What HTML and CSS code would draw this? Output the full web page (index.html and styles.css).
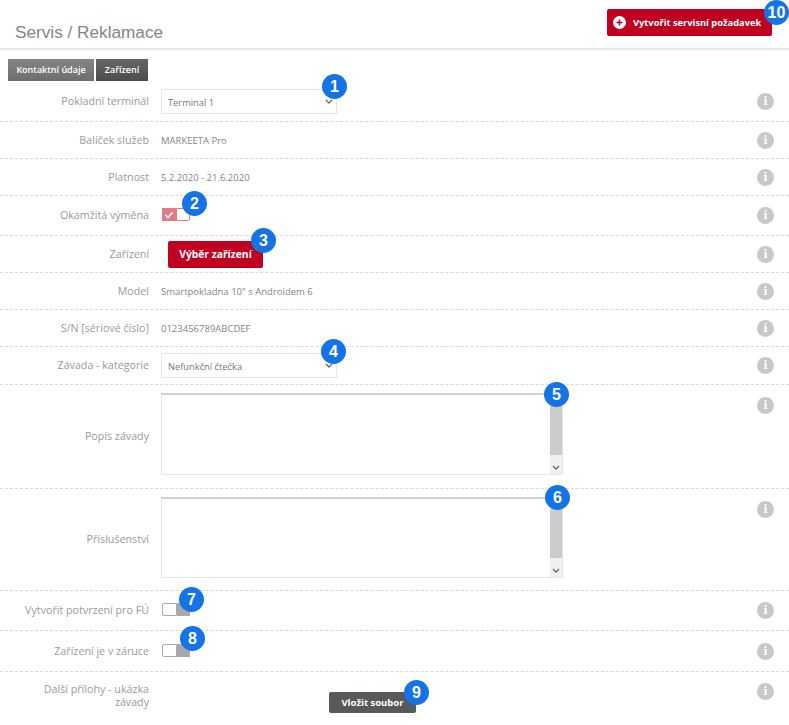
FILE: index.html
```html
<!DOCTYPE html>
<html lang="cs">
<head>
<meta charset="utf-8">
<title>Servis / Reklamace</title>
<link rel="stylesheet" href="styles.css">
</head>
<body>
<div class="page">
  <header class="head">
    <h1 class="title">Servis / Reklamace</h1>
    <button class="btn btn-create"><span class="plus"><svg width="13" height="13" viewBox="0 0 13 13"><circle cx="6.5" cy="6.5" r="6.5" fill="#fff"/><path d="M6.5 3.5v6M3.5 6.5h6" stroke="#a01024" stroke-width="1.5"/></svg></span>Vytvořit servisní požadavek</button>
  </header>
  <nav class="tabs">
    <span class="tab tab-light">Kontaktní údaje</span>
    <span class="tab tab-dark">Zařízení</span>
  </nav>
  <main>
    <div class="row h40"><div class="label">Pokladní terminál</div><div class="ctl"><div class="select">Terminal 1<svg class="chev" width="8" height="6" viewBox="0 0 8 6"><path d="M1 1l3 3 3-3" fill="none" stroke="#666" stroke-width="1.3"/></svg></div></div><span class="info">i</span></div>
    <div class="row h37"><div class="label">Balíček služeb</div><div class="ctl">MARKEETA Pro</div><span class="info">i</span></div>
    <div class="row h37"><div class="label">Platnost</div><div class="ctl">5.2.2020 - 21.6.2020</div><span class="info">i</span></div>
    <div class="row h40"><div class="label">Okamžitá výměna</div><div class="ctl"><div class="toggle on"><span class="t-fill"><svg width="10" height="8" viewBox="0 0 10 8"><path d="M1.5 4l2.5 2.5 4.5-5" fill="none" stroke="#fff" stroke-width="1.7"/></svg></span><span class="t-knob"></span></div></div><span class="info">i</span></div>
    <div class="row h37"><div class="label">Zařízení</div><div class="ctl"><button class="btn btn-pick">Výběr zařízení</button></div><span class="info">i</span></div>
    <div class="row h37"><div class="label">Model</div><div class="ctl">Smartpokladna 10" s Androidem 6</div><span class="info">i</span></div>
    <div class="row h37"><div class="label">S/N [sériové číslo]</div><div class="ctl">0123456789ABCDEF</div><span class="info">i</span></div>
    <div class="row h38"><div class="label">Závada - kategorie</div><div class="ctl"><div class="select">Nefunkční čtečka<svg class="chev" width="8" height="6" viewBox="0 0 8 6"><path d="M1 1l3 3 3-3" fill="none" stroke="#666" stroke-width="1.3"/></svg></div></div><span class="info">i</span></div>
    <div class="row h104 top-info"><div class="label">Popis závady</div><div class="ctl"><div class="area"><div class="scroll"><span class="thumb"></span><span class="sdown"><svg width="8" height="6" viewBox="0 0 8 6"><path d="M1 1l3 3 3-3" fill="none" stroke="#666" stroke-width="1.3"/></svg></span></div></div></div><span class="info">i</span></div>
    <div class="row h102 top-info"><div class="label">Příslušenství</div><div class="ctl"><div class="area"><div class="scroll"><span class="thumb"></span><span class="sdown"><svg width="8" height="6" viewBox="0 0 8 6"><path d="M1 1l3 3 3-3" fill="none" stroke="#666" stroke-width="1.3"/></svg></span></div></div></div><span class="info">i</span></div>
    <div class="row h40"><div class="label">Vytvořit potvrzení pro FÚ</div><div class="ctl"><div class="toggle off"><span class="t-knob"></span><span class="t-fill"></span></div></div><span class="info">i</span></div>
    <div class="row h41"><div class="label">Zařízení je v záruce</div><div class="ctl"><div class="toggle off"><span class="t-knob"></span><span class="t-fill"></span></div></div><span class="info">i</span></div>
    <div class="row last"><div class="label">Další přílohy - ukázka závady</div><div class="ctl"><button class="btn btn-file">Vložit soubor</button></div><span class="info">i</span></div>
  </main>
  <span class="badge b1">1</span>
  <span class="badge b2">2</span>
  <span class="badge b3">3</span>
  <span class="badge b4">4</span>
  <span class="badge b5">5</span>
  <span class="badge b6">6</span>
  <span class="badge b7">7</span>
  <span class="badge b8">8</span>
  <span class="badge b9">9</span>
  <span class="badge b10">10</span>
</div>
</body>
</html>
```
FILE: styles.css
```css
* { box-sizing: border-box; }
html, body { margin: 0; padding: 0; background: #fff; }
body { font-family: "Open Sans", "Noto Sans", sans-serif; color: #777; overflow: hidden; }
.page { position: relative; width: 789px; height: 725px; overflow: hidden; }

.head { height: 50px; border-bottom: 2px solid #e8e8e8; display: flex; justify-content: space-between; padding: 9px 17px 0 15px; }
.title { margin: 13px 0 0; font: 400 17.2px/20px "Liberation Sans", Arial, sans-serif; color: #858585; }

.btn { border: 0; color: #fff; font-family: "Open Sans", sans-serif; font-weight: 700; border-radius: 2px; padding: 0; cursor: pointer; }
.btn-create { width: 165px; height: 27px; background: #c00020; font-size: 9.3px; display: flex; align-items: center; padding-left: 6px; }
.plus { display: flex; margin-right: 7px; }
.btn-pick { width: 95px; height: 27px; background: #c00020; font-size: 10.3px; margin-left: 7px; }
.btn-file { width: 87px; height: 21px; background: #595959; font-size: 9.5px; margin: 20px 0 0 168px; display: block; }

.tabs { display: flex; gap: 2px; padding: 9px 0 0 8px; height: 32px; }
.tab { height: 22px; color: #fff; font-size: 9px; font-weight: 600; line-height: 22px; text-align: center; }
.tab-light { width: 86px; background: linear-gradient(#858585, #6e6e6e); }
.tab-dark { width: 52px; background: linear-gradient(#666, #4d4d4d); }

.row { display: flex; align-items: center; border-bottom: 1px dashed #d8d8d8; position: relative; font-size: 9.5px; color: #777; }
.h37 { height: 37px; }
.h38 { height: 38px; }
.h40 { height: 40px; }
.h41 { height: 41px; }
.h102 { height: 102px; }
.h104 { height: 104px; }
.last { height: 54px; align-items: flex-start; border-bottom: 0; }

.label { width: 150px; flex: none; padding-right: 1px; text-align: right; font-size: 10.7px; line-height: 13px; color: #9a9a9a; }
.last .label { padding: 11px 1px 0 30px; }
.ctl { flex: 1; margin-left: 11px; color: #858585; }

.info { flex: none; width: 17px; height: 17px; margin-right: 15px; border-radius: 50%; background: #c8c8c8; color: #fff; font: 700 10.5px/17px "DejaVu Serif", serif; text-align: center; }
.top-info .ctl { align-self: flex-start; margin-top: 8px; }
.top-info .info { align-self: flex-start; margin-top: 12px; }
.last .info { margin-top: 11px; }

.select { position: relative; width: 176px; height: 25px; border: 1px solid #e6e6e6; padding-left: 6px; font-size: 9.3px; line-height: 25px; color: #777; }
.chev { position: absolute; right: 3px; top: 9px; }

.toggle { display: flex; width: 28px; height: 13px; margin: -2px 0 0 1px; }
.t-knob { flex: 1; background: #fff; border: 1px solid #c0c0c0; }
.t-fill { flex: 1; display: flex; align-items: center; justify-content: center; }
.on .t-fill { background: #e07a86; flex: 1.2; }
.on .t-knob { border-color: #e07a86; border-radius: 0 2px 2px 0; }
.off .t-fill { background: #a8a8a8; }
.off .t-knob { border-radius: 2px 0 0 2px; border-color: #aaa; }

.area { position: relative; width: 402px; height: 82px; border: 1px solid #e6e6e6; border-top: 2px solid #d0d0d0; }
.h102 .area { height: 81px; }
.scroll { position: absolute; top: 0; right: 0; bottom: 0; width: 12px; display: flex; flex-direction: column; }
.thumb { flex: 1; background: #cbcbcb; }
.sdown { height: 19px; background: #f0f0f0; display: flex; align-items: flex-end; justify-content: center; padding-bottom: 3px; }

.badge { position: absolute; width: 25px; height: 25px; border-radius: 50%; background: #1473e6; color: #fff; font: 700 16px/25px "Liberation Sans", Arial, sans-serif; text-align: center; }
.b1 { left: 322px; top: 74px; }
.b2 { left: 182px; top: 191px; }
.b3 { left: 251px; top: 228px; }
.b4 { left: 321px; top: 339px; }
.b5 { left: 544px; top: 382px; }
.b6 { left: 545px; top: 485px; }
.b7 { left: 179px; top: 587px; }
.b8 { left: 180px; top: 626px; }
.b9 { left: 404px; top: 680px; }
.b10 { left: 764px; top: 0; }
```
